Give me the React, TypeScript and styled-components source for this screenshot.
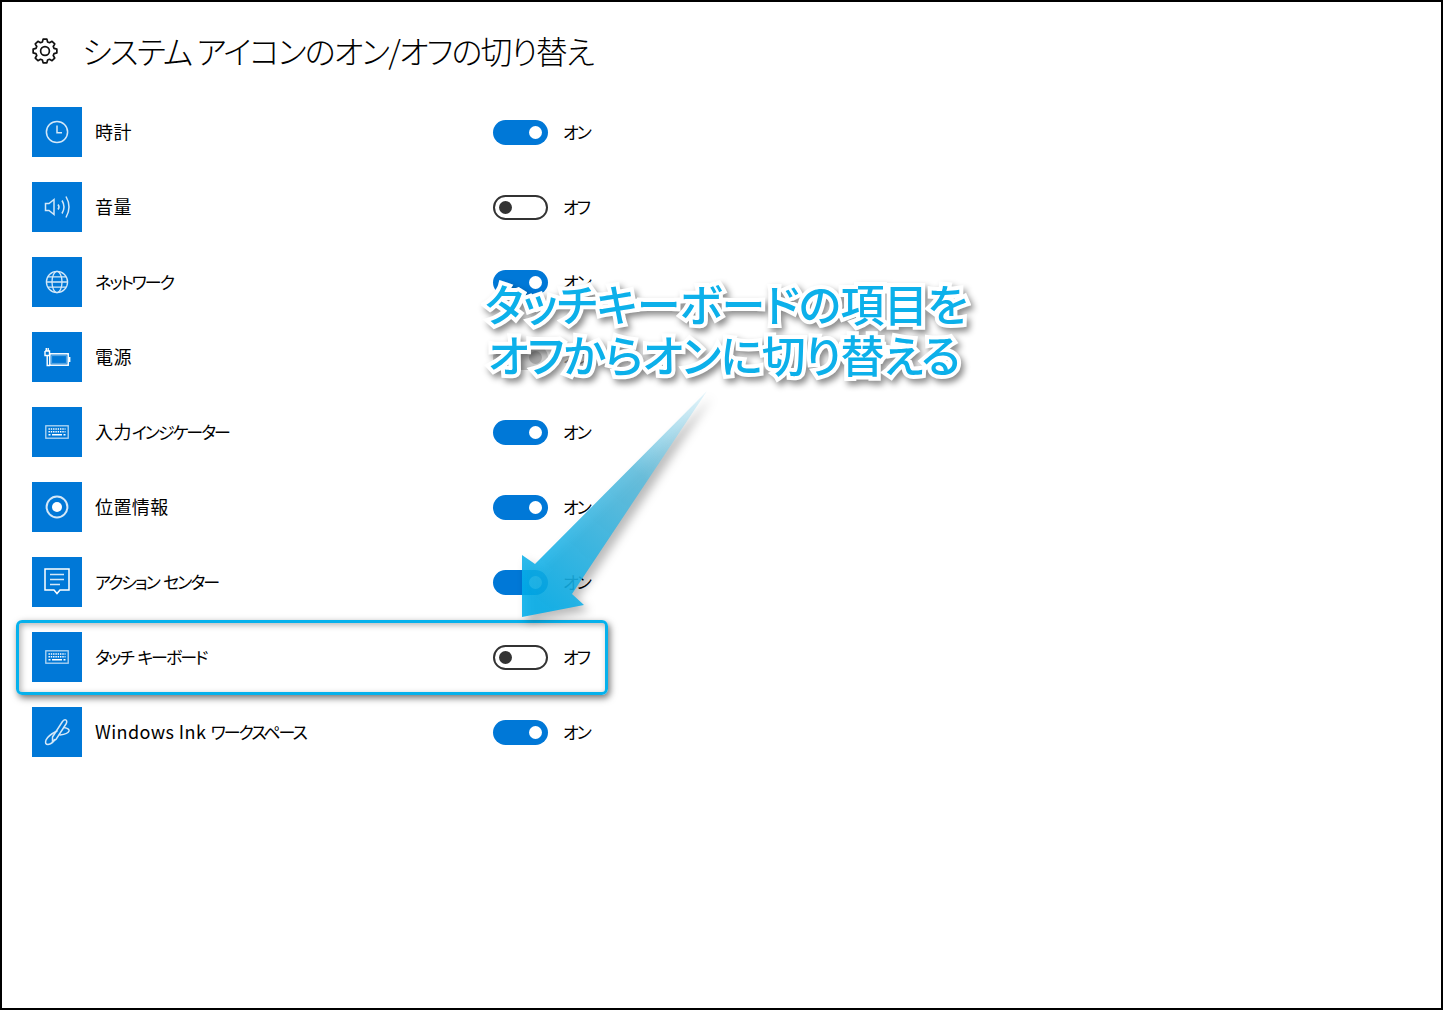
import React from 'react';
import styled, { createGlobalStyle } from 'styled-components';

const GlobalStyle = createGlobalStyle`
  html, body {
    margin: 0;
    padding: 0;
    background: #fff;
  }
  body {
    font-family: "Noto Sans CJK JP", "Noto Sans", sans-serif;
    color: #000;
  }
`;

const Page = styled.div`
  position: relative;
  box-sizing: border-box;
  width: 1443px;
  height: 1010px;
  border: 2px solid #000;
  padding: 30px 0 0 30px;
  overflow: hidden;
  font-feature-settings: "palt";
`;

const Header = styled.header`
  display: flex;
  align-items: center;
  height: 38px;
  margin-bottom: 37px;
`;

const GearBox = styled.span`
  display: flex;
  width: 50px;
  color: #111;
`;

const Title = styled.h1`
  margin: 0 0 3px;
  font-size: 32px;
  font-weight: 300;
  line-height: 36px;
  letter-spacing: -1.78px;
`;

const List = styled.div`
  display: flex;
  flex-direction: column;
  gap: 25px;
`;

const Row = styled.div`
  display: grid;
  grid-template-columns: 50px 411px 55px auto;
  align-items: center;
  height: 50px;
`;

const Tile = styled.div`
  display: flex;
  align-items: center;
  justify-content: center;
  width: 50px;
  height: 50px;
  background: #0078d7;
  color: #d4e8f8;
`;

const Label = styled.span`
  padding: 0 0 2px 13px;
  font-size: 18px;
  font-weight: 400;
  line-height: 24px;
  letter-spacing: 0.4px;
`;

const Kana = styled.span`
  font-size: 17px;
  letter-spacing: -2px;
`;

const Track = styled.span<{ $on: boolean; $muted: boolean }>`
  box-sizing: border-box;
  display: flex;
  align-items: center;
  justify-content: ${(p) => (p.$on ? 'flex-end' : 'flex-start')};
  width: 55px;
  height: 25px;
  padding: 0 ${(p) => (p.$on ? '6px' : '4px')};
  border-radius: 13px;
  background: ${(p) => (p.$muted ? '#ccc' : p.$on ? '#0078d7' : '#fff')};
  border: ${(p) => (p.$on ? 'none' : '2px solid #333')};
`;

const Knob = styled.span<{ $on: boolean; $muted: boolean }>`
  width: 13px;
  height: 13px;
  border-radius: 50%;
  background: ${(p) => (p.$muted ? '#a6a6a6' : p.$on ? '#fff' : '#333')};
`;

const State = styled.span<{ $muted: boolean }>`
  padding: 0 0 1px 15px;
  font-size: 17px;
  font-weight: 400;
  line-height: 24px;
  letter-spacing: -2px;
  color: ${(p) => (p.$muted ? '#999' : '#000')};
`;

const Highlight = styled.div`
  position: absolute;
  left: 14px;
  top: 618px;
  box-sizing: border-box;
  width: 592px;
  height: 75px;
  border: 3px solid #06b1ec;
  border-radius: 6px;
  box-shadow: 2px 3px 7px rgba(0, 0, 0, 0.55), inset 2px 2px 6px rgba(0, 0, 0, 0.3);
`;

const Arrow = styled.svg`
  position: absolute;
  left: 0;
  top: 0;
  filter: drop-shadow(5px 6px 5px rgba(0, 0, 0, 0.3));
`;

const Callout = styled.div`
  position: absolute;
  left: 481px;
  top: 276px;
  font-size: 44px;
  font-weight: 500;
  line-height: 51px;
  white-space: nowrap;
  color: #0cb0ea;
  -webkit-text-stroke: 8px #fff;
  paint-order: stroke fill;
  filter: drop-shadow(3px 4px 3px rgba(0, 0, 0, 0.45));
`;

const CalloutLine = styled.div<{ $indent: number; $spacing: number }>`
  padding-left: ${(p) => p.$indent}px;
  letter-spacing: ${(p) => p.$spacing}px;
`;

const s = { fill: 'none', stroke: 'currentColor', strokeWidth: 1.5 };

const gearPath = () => {
  const teeth = 8;
  const step = (Math.PI * 2) / teeth;
  const pts: string[] = [];
  for (let i = 0; i < teeth; i++) {
    const a = i * step - Math.PI / 2;
    [
      [9.4, a - step * 0.36],
      [12, a - step * 0.2],
      [12, a + step * 0.2],
      [9.4, a + step * 0.36],
    ].forEach(([r, t]) => {
      pts.push(`${(13 + r * Math.cos(t)).toFixed(2)} ${(13 + r * Math.sin(t)).toFixed(2)}`);
    });
  }
  return `M${pts.join('L')}Z`;
};

const GearIcon = () => (
  <svg width="26" height="26" viewBox="0 0 26 26" fill="none" stroke="currentColor" strokeWidth="1.7" strokeLinejoin="round">
    <path d={gearPath()} />
    <circle cx="13" cy="13" r="4.4" />
  </svg>
);

const ClockIcon = () => (
  <svg width="24" height="24" viewBox="0 0 24 24" {...s}>
    <circle cx="12" cy="12" r="10.6" />
    <path d="M12 5.5V12.8H17" />
  </svg>
);

const VolumeIcon = () => (
  <svg width="26" height="26" viewBox="0 0 26 26" {...s}>
    <path d="M1.5 9.5H5L10 5.5V20.5L5 16.5H1.5Z" />
    <path d="M14 10.5Q16 13 14 15.5" />
    <path d="M18 6.5Q22 13 18 19.5" />
    <path d="M22 2.5Q28 13 22 23.5" />
  </svg>
);

const GlobeIcon = () => (
  <svg width="24" height="24" viewBox="0 0 24 24" {...s} strokeWidth="1.3">
    <circle cx="12" cy="12" r="10.6" />
    <ellipse cx="12" cy="12" rx="5" ry="10.6" />
    <path d="M1.4 12H22.6M3 6.8H21M3 17.2H21" />
  </svg>
);

const PowerIcon = () => (
  <svg width="27" height="19" viewBox="0 0 27 19" {...s} stroke="#fff">
    <path d="M1 3V7.5H5.5V3H1M2.3 3V0M4.2 3V0" strokeWidth="1.4" />
    <path d="M3.2 7.5V17.5H6" strokeWidth="1.4" />
    <rect x="5.8" y="5.8" width="18.4" height="11.4" />
    <rect x="7.6" y="7.6" width="14.8" height="7.8" stroke="#fff" strokeWidth="1" opacity="0.35" />
    <path d="M25.6 9V14" strokeWidth="1.6" />
  </svg>
);

const KeyboardIcon = () => (
  <svg width="24" height="14" viewBox="0 0 24 14" {...s}>
    <rect x="0.8" y="0.8" width="22.4" height="12.4" strokeWidth="1.3" opacity="0.85" />
    <path d="M3.5 4H20.5M3.5 6.8H20.5" strokeWidth="1.5" strokeDasharray="1.4 0.9" stroke="#fff" />
    <path d="M3.5 9.8H5.5M7 9.8H17M18.5 9.8H20.5" strokeWidth="1.5" stroke="#fff" />
  </svg>
);

const LocationIcon = () => (
  <svg width="24" height="24" viewBox="0 0 24 24" {...s}>
    <circle cx="12" cy="12" r="10.4" strokeWidth="2" />
    <circle cx="12" cy="12" r="5" fill="#fff" stroke="none" />
  </svg>
);

const ActionIcon = () => (
  <svg width="26" height="28" viewBox="0 0 26 28" {...s}>
    <path d="M1 1H25V22H16L13 25.5L10 22H1Z" stroke="#fff" />
    <path d="M6 6.5H20M6 11.5H20M6 16.5H16" />
  </svg>
);

const InkIcon = () => (
  <svg width="26" height="28" viewBox="0 0 26 28" {...s} strokeLinecap="round">
    <path d="M8.5 19L18.5 3.5Q20.5 1 22 2Q23.5 3.5 22 6L12 21.5L8.5 23Z" />
    <path d="M13 13Q4 17.5 2 22Q0.5 26.5 4 26.5Q8 26 11 21.5" />
    <path d="M20 9.5Q25.5 10.5 25 13Q24 16 16 17" />
  </svg>
);

type Item = { label: string; on: boolean; muted?: boolean; icon: React.ReactNode };

const items: Item[] = [
  { label: '時計', on: true, icon: <ClockIcon /> },
  { label: '音量', on: false, icon: <VolumeIcon /> },
  { label: 'ネットワーク', on: true, icon: <GlobeIcon /> },
  { label: '電源', on: true, muted: true, icon: <PowerIcon /> },
  { label: '入力インジケーター', on: true, icon: <KeyboardIcon /> },
  { label: '位置情報', on: true, icon: <LocationIcon /> },
  { label: 'アクション センター', on: true, icon: <ActionIcon /> },
  { label: 'タッチ キーボード', on: false, icon: <KeyboardIcon /> },
  { label: 'Windows Ink ワークスペース', on: true, icon: <InkIcon /> },
];

// katakana runs sit much tighter than kanji in the original
const renderLabel = (text: string) =>
  text.split(/([\u30A0-\u30FF]+)/).map((part, i) =>
    i % 2 === 1 ? <Kana key={i}>{part}</Kana> : part,
  );

const App: React.FC = () => (
  <Page>
    <GlobalStyle />
    <Header>
      <GearBox>
        <GearIcon />
      </GearBox>
      <Title>システム アイコンのオン/オフの切り替え</Title>
    </Header>
    <List>
      {items.map((item) => (
        <Row key={item.label}>
          <Tile>{item.icon}</Tile>
          <Label>{renderLabel(item.label)}</Label>
          <Track $on={item.on} $muted={!!item.muted}>
            <Knob $on={item.on} $muted={!!item.muted} />
          </Track>
          <State $muted={!!item.muted}>{item.on ? 'オン' : 'オフ'}</State>
        </Row>
      ))}
    </List>
    <Highlight />
    <Arrow width="1441" height="1008" viewBox="0 0 1441 1008">
      <defs>
        <linearGradient id="arrowFill" x1="705" y1="389" x2="535" y2="600" gradientUnits="userSpaceOnUse">
          <stop offset="0" stopColor="#d8f0f8" stopOpacity="0.7" />
          <stop offset="0.4" stopColor="#5ebcdc" stopOpacity="0.9" />
          <stop offset="1" stopColor="#00adea" stopOpacity="0.88" />
        </linearGradient>
      </defs>
      <polygon points="705,389 533,562 520,553 520,615 582,603 570,592" fill="url(#arrowFill)" />
    </Arrow>
    <Callout>
      <CalloutLine $indent={2} $spacing={-0.6}>タッチキーボードの項目を</CalloutLine>
      <CalloutLine $indent={5} $spacing={-0.9}>オフからオンに切り替える</CalloutLine>
    </Callout>
  </Page>
);

export default App;
